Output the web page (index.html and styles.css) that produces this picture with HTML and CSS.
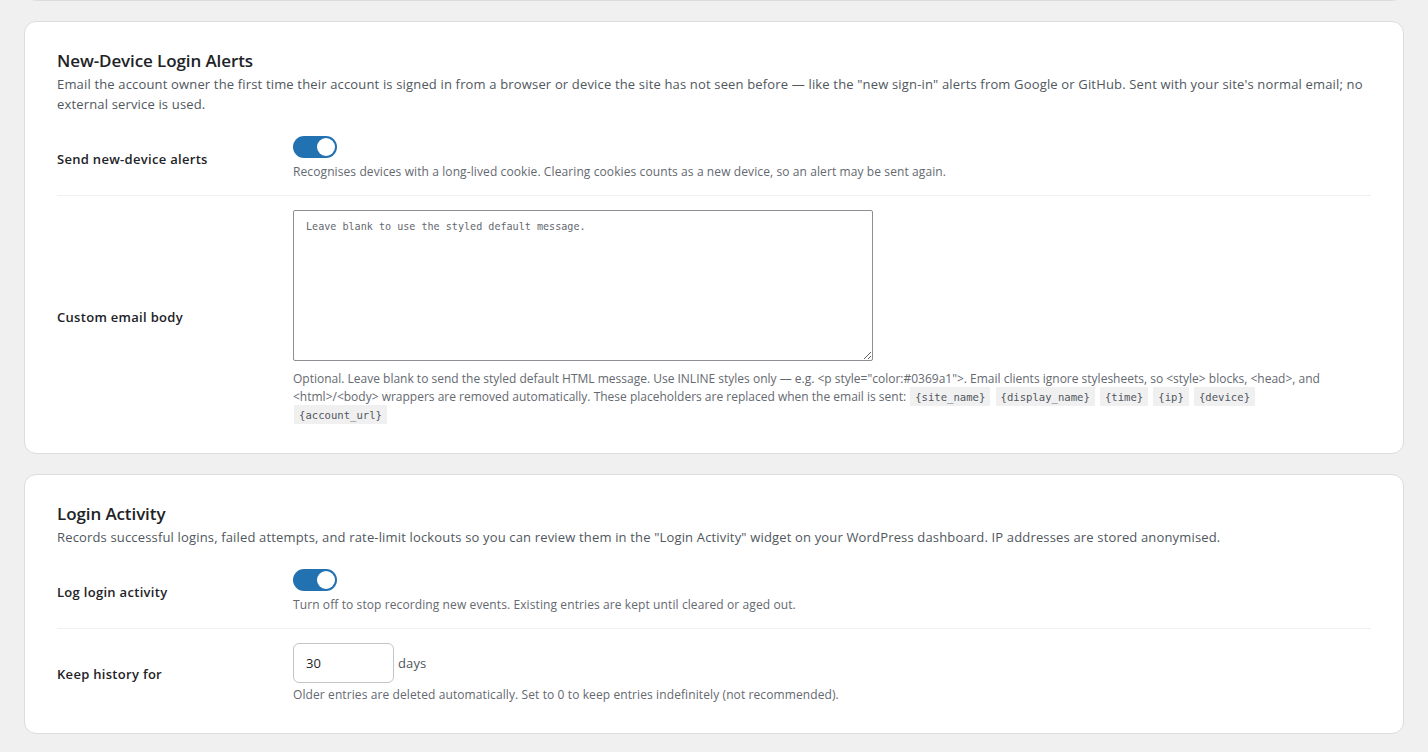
FILE: index.html
```html
<!DOCTYPE html>
<html lang="en">
<head>
<meta charset="utf-8">
<title>Security settings</title>
<link rel="stylesheet" href="styles.css">
</head>
<body>
<div class="page">
  <div class="card card-tail"></div>

  <section class="card">
    <h2 class="card-title">New-Device Login Alerts</h2>
    <p class="card-desc">Email the account owner the first time their account is signed in from a browser or device the site has not seen before — like the "new sign-in" alerts from Google or GitHub. Sent with your site's normal email; no external service is used.</p>
    <div class="rows">
      <div class="row">
        <div class="row-label">Send new-device alerts</div>
        <div class="row-field">
          <span class="toggle"><span class="knob"></span></span>
          <p class="hint hint-toggle">Recognises devices with a long-lived cookie. Clearing cookies counts as a new device, so an alert may be sent again.</p>
        </div>
      </div>
      <div class="row">
        <div class="row-label">Custom email body</div>
        <div class="row-field">
          <textarea class="body-input" placeholder="Leave blank to use the styled default message."></textarea>
          <p class="hint hint-area">Optional. Leave blank to send the styled default HTML message. Use INLINE styles only — e.g. &lt;p style="color:#0369a1"&gt;. Email clients ignore stylesheets, so &lt;style&gt; blocks, &lt;head&gt;, and &lt;html&gt;/&lt;body&gt; wrappers are removed automatically. These placeholders are replaced when the email is sent: <code>{site_name}</code> <code>{display_name}</code> <code>{time}</code> <code>{ip}</code> <code>{device}</code> <code>{account_url}</code></p>
        </div>
      </div>
    </div>
  </section>

  <section class="card">
    <h2 class="card-title">Login Activity</h2>
    <p class="card-desc">Records successful logins, failed attempts, and rate-limit lockouts so you can review them in the "Login Activity" widget on your WordPress dashboard. IP addresses are stored anonymised.</p>
    <div class="rows">
      <div class="row">
        <div class="row-label">Log login activity</div>
        <div class="row-field">
          <span class="toggle"><span class="knob"></span></span>
          <p class="hint hint-toggle">Turn off to stop recording new events. Existing entries are kept until cleared or aged out.</p>
        </div>
      </div>
      <div class="row">
        <div class="row-label">Keep history for</div>
        <div class="row-field">
          <div class="inline-field">
            <input class="num-input" type="text" value="30">
            <span class="unit">days</span>
          </div>
          <p class="hint hint-num">Older entries are deleted automatically. Set to 0 to keep entries indefinitely (not recommended).</p>
        </div>
      </div>
    </div>
  </section>
</div>
</body>
</html>
```

FILE: styles.css
```css
* { box-sizing: border-box; }

html, body {
  margin: 0;
  padding: 0;
  background: #f0f0f1;
}

body {
  font-family: "Open Sans", "Noto Sans", sans-serif;
  font-size: 13px;
  color: #1d2327;
}

.page {
  padding: 0 24px;
}

.card {
  background: #fff;
  border: 1px solid #dcdcde;
  border-radius: 12px;
  padding: 26px 32px 15px;
  margin-bottom: 20px;
}

.card-tail {
  height: 31px;
  margin-top: -30px;
  padding: 0;
}

.card-title {
  margin: 0;
  font-size: 17px;
  line-height: 26px;
  font-weight: 600;
  letter-spacing: -0.1px;
  color: #1d2327;
}

.card-desc {
  margin: 0;
  font-size: 13px;
  line-height: 20px;
  letter-spacing: 0.16px;
  color: #50575e;
}

.rows {
  margin-top: 8px;
}

.row {
  display: grid;
  grid-template-columns: 236px 1fr;
  align-items: center;
  padding: 14px 0;
  border-bottom: 1px solid #f0f0f1;
}

.row:last-child {
  border-bottom: 0;
}

.row-label {
  font-size: 13px;
  font-weight: 600;
  letter-spacing: 0.3px;
  color: #1d2327;
}

.row-field {
  min-width: 0;
}

.toggle {
  display: flex;
  justify-content: flex-end;
  align-items: center;
  width: 44px;
  height: 22px;
  padding: 2px;
  border-radius: 11px;
  background: #2271b1;
}

.knob {
  width: 18px;
  height: 18px;
  border-radius: 50%;
  background: #fff;
}

.hint {
  margin: 0;
  font-size: 12px;
  line-height: 18px;
  letter-spacing: 0.1px;
  color: #646970;
}

.hint-toggle { margin-top: 5px; }
.hint-area {
  margin-top: 9px;
  max-width: 1038px;
  letter-spacing: 0;
}
.hint-num { margin-top: 3px; }

.body-input {
  display: block;
  width: 580px;
  height: 151px;
  margin: 0;
  padding: 8px 12px;
  border: 1px solid #8c8f94;
  border-radius: 2px;
  font-family: "DejaVu Sans Mono", "Liberation Mono", monospace;
  font-size: 10.1px;
  line-height: 15px;
  color: #2c3338;
  resize: both;
}

.body-input::placeholder {
  color: #646970;
  opacity: 1;
}

code {
  font-family: "DejaVu Sans Mono", "Liberation Mono", monospace;
  font-size: 10.6px;
  line-height: 1;
  letter-spacing: 0;
  padding: 4px 5px 3px;
  margin: 0 1px;
  background: #f0f0f1;
  color: #50575e;
}

.inline-field {
  display: flex;
  align-items: center;
  gap: 4px;
}

.num-input {
  width: 101px;
  height: 40px;
  margin: 0;
  padding: 0 12px;
  border: 1px solid #c3c4c7;
  border-radius: 6px;
  font-family: inherit;
  font-size: 13px;
  color: #1d2327;
  background: #fff;
}

.unit {
  font-size: 13px;
  letter-spacing: 0.1px;
  color: #50575e;
}
```
